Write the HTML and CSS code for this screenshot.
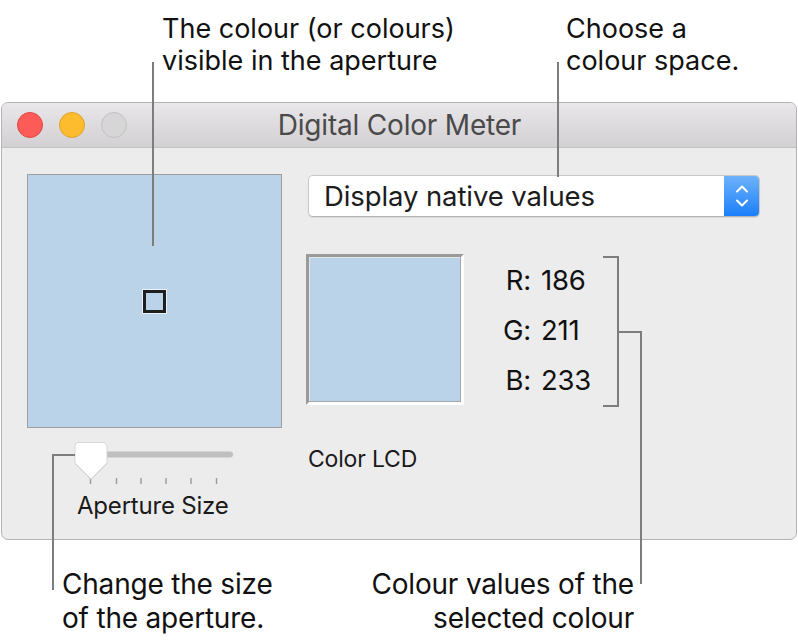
FILE: index.html
```html
<!DOCTYPE html>
<html lang="en">
<head>
<meta charset="utf-8">
<title>Digital Color Meter</title>
<link rel="stylesheet" href="styles.css">
</head>
<body>
<div class="page">
  <div class="top-notes">
    <p class="note note-aperture">The colour (or colours)<br>visible in the aperture</p>
    <p class="note note-space">Choose a<br>colour space.</p>
  </div>

  <div class="window">
    <div class="titlebar">
      <div class="lights">
        <span class="light light-close"></span>
        <span class="light light-min"></span>
        <span class="light light-zoom"></span>
      </div>
      <div class="title">Digital Color Meter</div>
    </div>
    <div class="content">
      <div class="left-col">
        <div class="aperture-view">
          <span class="aperture-marker"></span>
        </div>
        <div class="slider">
          <svg width="162" height="46" viewBox="0 0 162 46">
            <rect x="2" y="10.5" width="158" height="6" rx="3" fill="#c0c0c0"/>
            <g stroke="#9a9a9a" stroke-width="1.4">
              <line x1="17.5" y1="37" x2="17.5" y2="43"/>
              <line x1="43.5" y1="37" x2="43.5" y2="43"/>
              <line x1="68" y1="37" x2="68" y2="43"/>
              <line x1="93" y1="37" x2="93" y2="43"/>
              <line x1="118" y1="37" x2="118" y2="43"/>
              <line x1="143.5" y1="37" x2="143.5" y2="43"/>
            </g>
            <path d="M5,1.5 H30 Q34,1.5 34,5.5 V22 L18,38 L2,22 V5.5 Q2,1.5 5,1.5 Z" fill="#c4c4c4" transform="translate(0,0.8)"/>
            <path d="M5,1.5 H30 Q34,1.5 34,5.5 V22 L18,38 L2,22 V5.5 Q2,1.5 5,1.5 Z" fill="#ffffff" stroke="#cfcfcf" stroke-width="0.8"/>
          </svg>
        </div>
        <div class="slider-label">Aperture Size</div>
      </div>
      <div class="right-col">
        <div class="popup">
          <span class="popup-text">Display native values</span>
          <span class="stepper">
            <svg width="16" height="26" viewBox="0 0 16 26">
              <path d="M3,8.5 L8,3.5 L13,8.5" fill="none" stroke="#fff" stroke-width="2" stroke-linecap="round" stroke-linejoin="round"/>
              <path d="M3,17.5 L8,22.5 L13,17.5" fill="none" stroke="#fff" stroke-width="2" stroke-linecap="round" stroke-linejoin="round"/>
            </svg>
          </span>
        </div>
        <div class="readout">
          <div class="sample"></div>
          <div class="values">
            <span class="lbl">R:</span><span class="num">186</span>
            <span class="lbl">G:</span><span class="num">211</span>
            <span class="lbl">B:</span><span class="num">233</span>
          </div>
        </div>
        <div class="display-name">Color LCD</div>
      </div>
    </div>
  </div>

  <div class="bottom-notes">
    <p class="note note-size">Change the size<br>of the aperture.</p>
    <p class="note note-values">Colour values of the<br>selected colour</p>
  </div>

  <svg class="callouts" width="798" height="641" viewBox="0 0 798 641">
    <g fill="none" stroke="#7d7d7d" stroke-width="2">
      <path d="M153,62 V246"/>
      <path d="M558,62 V177"/>
      <path d="M75,455 H53 V590"/>
      <path d="M603,257 H618 V406 H603"/>
      <path d="M618,332 H641 V584"/>
    </g>
  </svg>
</div>
</body>
</html>
```

FILE: styles.css
```css
* { box-sizing: border-box; }

html, body {
  margin: 0;
  padding: 0;
  background: #ffffff;
}

body {
  font-family: "Inter", "Liberation Sans", "DejaVu Sans", sans-serif;
  color: #111;
}

.page {
  position: relative;
  width: 798px;
  height: 641px;
  overflow: hidden;
}

.note {
  margin: 0;
  font-size: 28px;
  letter-spacing: -0.2px;
  color: #111;
  white-space: nowrap;
}

.top-notes {
  height: 102px;
  display: grid;
  grid-template-columns: 404px auto;
  padding-left: 162px;
  padding-top: 13px;
}

.top-notes .note {
  font-size: 27px;
  letter-spacing: 0;
  line-height: 32px;
}

.window {
  margin-left: 1px;
  width: 796px;
  height: 438px;
  border: 1px solid #b4b4b4;
  border-radius: 7px;
  background: #ececec;
  overflow: hidden;
}

.titlebar {
  position: relative;
  height: 45px;
  background: linear-gradient(#e9e7e9, #d2d0d2);
  border-bottom: 1px solid #c3c3c3;
  display: flex;
  align-items: center;
  justify-content: center;
}

.lights {
  position: absolute;
  left: 15px;
  top: 9px;
  display: flex;
  gap: 16px;
}

.light {
  width: 26px;
  height: 26px;
  border-radius: 50%;
  border: 1px solid;
}

.light-close { background: #fc5b57; border-color: #e2463f; }
.light-min { background: #fdbc2e; border-color: #e0a127; }
.light-zoom { background: #d6d6d6; border-color: #c2c2c2; }

.title {
  font-size: 28px;
  color: #4a4a4a;
  letter-spacing: -0.2px;
  padding-left: 1px;
}

.content {
  display: flex;
  gap: 26px;
  padding: 26px 0 0 25px;
}

.left-col {
  width: 255px;
  display: flex;
  flex-direction: column;
}

.aperture-view {
  width: 255px;
  height: 254px;
  background: #bad3e9;
  border: 1px solid #9e9e9e;
  display: flex;
  align-items: center;
  justify-content: center;
}

.aperture-marker {
  width: 23px;
  height: 23px;
  border: 3px solid #1e1e1e;
  box-shadow: 0 0 0 1px rgba(255,255,255,0.7);
}

.slider {
  margin-left: 46px;
  margin-top: 13px;
  height: 46px;
}

.slider svg { display: block; }

.slider-label {
  margin-left: 50px;
  margin-top: 4px;
  font-size: 24px;
  line-height: 29px;
  letter-spacing: -0.2px;
  color: #1a1a1a;
  white-space: nowrap;
}

.right-col {
  width: 452px;
  display: flex;
  flex-direction: column;
}

.popup {
  margin-top: 1px;
  height: 42px;
  display: flex;
  align-items: stretch;
  background: #ffffff;
  border: 1px solid #c9c9c9;
  border-bottom-color: #b3b3b3;
  border-radius: 5px;
  box-shadow: 0 1px 1px rgba(0,0,0,0.08);
  overflow: hidden;
}

.popup-text {
  flex: 1;
  display: flex;
  align-items: center;
  padding-left: 15px;
  font-size: 27.5px;
  letter-spacing: -0.1px;
  color: #1c1c1c;
}

.stepper {
  width: 35px;
  display: flex;
  align-items: center;
  justify-content: center;
  background: linear-gradient(#6eb2fb, #1b7ffa);
}

.readout {
  margin-top: 37px;
  display: flex;
  align-items: flex-start;
}

.sample {
  width: 158px;
  height: 151px;
  margin-left: -2px;
  background: #bad3e9;
  border: 3px solid;
  border-color: #9a9a9a #ffffff #ffffff #9a9a9a;
  box-shadow: inset -1px -1px 0 #a6a6a6, inset 1px 1px 0 #e5e5e5;
}

.values {
  margin-left: 33px;
  margin-top: 1px;
  display: grid;
  grid-template-columns: 34px auto;
  column-gap: 10px;
  row-gap: 0;
  font-size: 27.5px;
  line-height: 50px;
  letter-spacing: -0.2px;
  color: #111;
}

.lbl { text-align: right; }

.display-name {
  margin-top: 40px;
  font-size: 23px;
  line-height: 28px;
  letter-spacing: -0.2px;
  color: #1a1a1a;
}

.bottom-notes {
  display: grid;
  grid-template-columns: 1fr 1fr;
  padding: 27px 164px 0 62px;
}

.bottom-notes .note {
  line-height: 34px;
}

.note-values {
  text-align: right;
}

.callouts {
  position: absolute;
  left: 0;
  top: 0;
  pointer-events: none;
}
```
